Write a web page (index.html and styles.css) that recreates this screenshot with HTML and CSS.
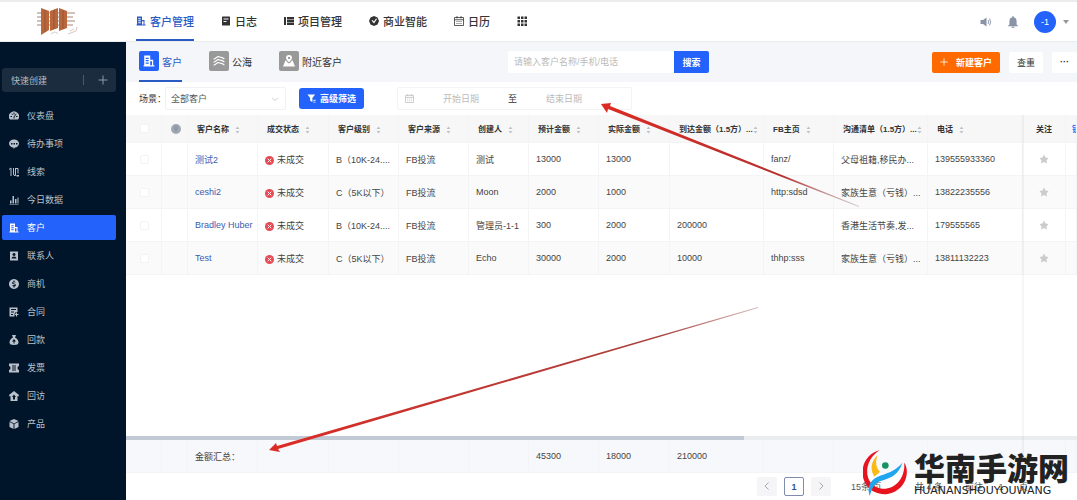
FILE: index.html
```html
<!DOCTYPE html>
<html lang="zh-CN">
<head>
    <meta charset="utf-8">
    <title>客户管理</title>
    <link rel="stylesheet" href="styles.css">
</head>
<body>
    <!-- icon sprite -->
    <svg class="sprite" aria-hidden="true">
        <symbol id="i-building" viewBox="0 0 20 20"><path fill-rule="evenodd" d="M2 1h10v7h5v9h2v2H1v-2h1zM4.500 4.500v2h5v-2zm0 4v2h5v-2zm0 4v2h5v-2zM12 10.500V17h3v-6.500z"/></symbol>
        <symbol id="i-log" viewBox="0 0 20 20"><path fill-rule="evenodd" d="M3 1h14q1 0 1 1v16q0 1-1 1H3q-1 0-1-1V2q0-1 1-1zm2 4v2h10V5zm0 5v2h6v-2z"/></symbol>
        <symbol id="i-project" viewBox="0 0 20 20"><path d="M0 2h4v16H0zM6 2h14v4H6zM6 7h14v5H6zM6 13h14v5H6z"/></symbol>
        <symbol id="i-bi" viewBox="0 0 20 20"><path fill-rule="evenodd" d="M10 0l7 3 3 7-3 7-7 3-7-3-3-7 3-7zM5 9l5 6 6-9-2-1-4 6-3-3z"/></symbol>
        <symbol id="i-calendar" viewBox="0 0 20 20"><path d="M1 3h18v16H1zM1 7.500h18M6 0v5M14 0v5M5 11h2M9 11h2M13 11h2M5 15h2M9 15h2M13 15h2" fill="none" stroke="currentColor" stroke-width="1.600"/></symbol>
        <symbol id="i-grid" viewBox="0 0 20 20"><path d="M1 1h5v5H1zM8 1h5v5H8zM15 1h5v5h-5zM1 8h5v5H1zM8 8h5v5H8zM15 8h5v5h-5zM1 15h5v5H1zM8 15h5v5H8zM15 15h5v5h-5z"/></symbol>
        <symbol id="i-sound" viewBox="0 0 24 20"><path d="M1 6h5l7-5v18l-7-5H1z"/><path d="M16 6q3 4 0 8M19 3q5 7 0 14" fill="none" stroke="currentColor" stroke-width="1.800"/></symbol>
        <symbol id="i-bell" viewBox="0 0 20 20"><path d="M9 0h2v2q5 1 5 7v5l3 3H1l3-3V9q0-6 5-7zM7 18h6q-1 2-3 2t-3-2z"/></symbol>
        <symbol id="i-gauge" viewBox="0 0 20 20"><path fill-rule="evenodd" d="M2 17a10 10 0 1 1 16 0zM3 10h3v2H3zm3-5l2 2-1 1-2-2zm3-2h2v4H9zm5 2l1 1-4 6v3H9v-3zm0 5h3v2h-3z"/></symbol>
        <symbol id="i-todo" viewBox="0 0 20 20"><path fill-rule="evenodd" d="M10 1c6 0 10 4 10 8s-4 8-8 8l-3 3v-3C4 17 0 13 0 9s4-8 10-8zM4 8v3h3V8zm5 0v3h3V8zm5 0v3h3V8z"/></symbol>
        <symbol id="i-leads" viewBox="0 0 20 20"><path d="M0 5l4-3v16M9 2v12q0 4 4 3V2M13 3h5v10" fill="none" stroke="currentColor" stroke-width="2"/><path d="M15 16h5v3h-5z"/></symbol>
        <symbol id="i-bars" viewBox="0 0 20 20"><path d="M2 11h3v6H2zM7 2h3v15H7zM12 8h3v9h-3zM17 5h2v12h-2zM1 18h18v1H1z"/></symbol>
        <symbol id="i-contact" viewBox="0 0 20 20"><path fill-rule="evenodd" d="M2 1h16v18H2zm8 3a3 3 0 1 0 .1 0zM5 15h10q0-4-5-4t-5 4z"/></symbol>
        <symbol id="i-money" viewBox="0 0 20 20"><path fill-rule="evenodd" d="M10 0a10 10 0 1 1-.1 0zM9 3v2q-3 1-3 3t6 3q0 2-5 1v2l2 1v2h2v-2q3-1 3-3t-6-4q0-2 5-1V6l-2-1V3z"/></symbol>
        <symbol id="i-contract" viewBox="0 0 20 20"><path fill-rule="evenodd" d="M1 1h16v9h-4v3h-2v6H1zm3 3v2h10V4zm0 5v2h6V9zm0 5v2h4v-2zM14 11h2v3h3v2h-3v3h-2v-3h-2v-2h2z"/></symbol>
        <symbol id="i-bag" viewBox="0 0 20 20"><path fill-rule="evenodd" d="M6 0h8l-2 5q7 4 7 10 0 5-9 5t-9-5Q1 9 8 5zm4 8l-4 5h3v4h2v-4h3z"/></symbol>
        <symbol id="i-invoice" viewBox="0 0 20 20"><path fill-rule="evenodd" d="M0 1h20v5q-3 0-3 4t3 4v5H0v-5q3 0 3-4T0 6zm6 4v2h8V5zm0 4v2h8V9zm0 4v2h8v-2z"/></symbol>
        <symbol id="i-visit" viewBox="0 0 20 20"><path fill-rule="evenodd" d="M10 0l10 8-1 3-2-1v10H3V10l-2 1-1-3zm0 7l-4 5h2v5h4v-5h2z"/></symbol>
        <symbol id="i-box" viewBox="0 0 20 20"><path d="M10 0l9 4-9 5-9-5zM1 6l8 4v10l-8-4zM19 6l-8 4v10l8-4z"/></symbol>
        <symbol id="i-sea" viewBox="0 0 20 20"><path d="M1 7q3-1 5-3t4-1 4 1 5 3M1 12q3-1 5-3t4-1 4 1 5 3M1 17q3-1 5-3t4-1 4 1 5 3" fill="none" stroke="currentColor" stroke-width="1.800"/></symbol>
        <symbol id="i-near" viewBox="0 0 20 20"><path fill-rule="evenodd" d="M10 0a5 5 0 0 1 5 5q0 3-5 7-5-4-5-7a5 5 0 0 1 5-5zm0 3a2 2 0 1 0 .1 0z"/><path d="M4 9h1q2 3 5 5 3-2 5-5h1l4 10H0z"/></symbol>
        <symbol id="i-filter" viewBox="0 0 20 20"><path d="M1 1h17l-6 8v9l-5-3V9zM14 13h5v2h-5zM14 17h5v2h-5z"/></symbol>
        <symbol id="i-plus" viewBox="0 0 20 20"><path d="M10 1v18M1 10h18" fill="none" stroke="currentColor" stroke-width="2"/></symbol>
        <symbol id="i-down" viewBox="0 0 20 20"><path d="M3 7l7 7 7-7" fill="none" stroke="currentColor" stroke-width="2"/></symbol>
        <symbol id="i-left" viewBox="0 0 20 20"><path d="M13 3l-7 7 7 7" fill="none" stroke="currentColor" stroke-width="2"/></symbol>
        <symbol id="i-right" viewBox="0 0 20 20"><path d="M7 3l7 7-7 7" fill="none" stroke="currentColor" stroke-width="2"/></symbol>
        <symbol id="i-sort" viewBox="0 0 10 16"><path d="M5 1l4 5H1zM5 15l4-5H1z"/></symbol>
        <symbol id="i-fail" viewBox="0 0 20 20"><circle cx="10" cy="10" r="10" fill="#e54b54"/><path d="M6 6l8 8M14 6l-8 8" stroke="#fff" stroke-width="2"/></symbol>
        <symbol id="i-star" viewBox="0 0 20 20"><path d="M10 1l3 6 6 1-4 5 1 6-6-3-6 3 1-6-4-5 6-1z"/></symbol>
        <symbol id="i-info" viewBox="0 0 20 20"><circle cx="10" cy="10" r="10" fill="#a0a7b2"/><path d="M10 5a3 3 0 1 0 .1 0zM10 10v5" fill="none" stroke="#7d8796" stroke-width="2"/></symbol>
    </svg>

    <header class="header">
        <div class="logo">
            <svg viewBox="0 0 42 30" aria-label="Logo">
                <path d="M0 6h38M0 10h36M0 14h38M0 18h36" stroke="#a58473" stroke-width="1"/>
                <path d="M4 1l8 3v19l-8 5zM13 4l8-3v20l-8 3zM22 1l8 3v17l-8 3z" fill="#b9683d"/>
                <path d="M8 3v22M17 3v19M26 3v19" stroke="#9b5230" stroke-width="1"/>
                <path d="M14 27q4-4 7 0M31 27l8-3 1-4M33 24l4-2" stroke="#d8c9c1" stroke-width="1" fill="none"/>
            </svg>
        </div>
        <nav class="top-nav">
            <a href="#" class="active"><svg><use href="#i-building"/></svg>客户管理</a>
            <a href="#"><svg><use href="#i-log"/></svg>日志</a>
            <a href="#"><svg><use href="#i-project"/></svg>项目管理</a>
            <a href="#"><svg><use href="#i-bi"/></svg>商业智能</a>
            <a href="#"><svg><use href="#i-calendar"/></svg>日历</a>
            <a href="#" aria-label="更多应用"><svg><use href="#i-grid"/></svg></a>
        </nav>
        <div class="user">
            <svg class="user-icon"><use href="#i-sound"/></svg>
            <svg class="user-icon"><use href="#i-bell"/></svg>
            <div class="avatar">-1</div>
            <span class="caret"></span>
        </div>
    </header>

    <div class="layout">
        <aside class="sidebar">
            <button class="quick-create">快速创建<span class="quick-plus"><svg><use href="#i-plus"/></svg></span></button>
            <nav class="side-nav">
                <a href="#"><svg><use href="#i-gauge"/></svg>仪表盘</a>
                <a href="#"><svg><use href="#i-todo"/></svg>待办事项</a>
                <a href="#"><svg><use href="#i-leads"/></svg>线索</a>
                <a href="#"><svg><use href="#i-bars"/></svg>今日数据</a>
                <a href="#" class="active"><svg><use href="#i-building"/></svg>客户</a>
                <a href="#"><svg><use href="#i-contact"/></svg>联系人</a>
                <a href="#"><svg><use href="#i-money"/></svg>商机</a>
                <a href="#"><svg><use href="#i-contract"/></svg>合同</a>
                <a href="#"><svg><use href="#i-bag"/></svg>回款</a>
                <a href="#"><svg><use href="#i-invoice"/></svg>发票</a>
                <a href="#"><svg><use href="#i-visit"/></svg>回访</a>
                <a href="#"><svg><use href="#i-box"/></svg>产品</a>
            </nav>
        </aside>

        <main class="main">
            <div class="toolbar">
                <div class="tabs">
                    <a href="#" class="active"><span class="tab-icon"><svg><use href="#i-building"/></svg></span>客户</a>
                    <a href="#"><span class="tab-icon"><svg><use href="#i-sea"/></svg></span>公海</a>
                    <a href="#"><span class="tab-icon"><svg><use href="#i-near"/></svg></span>附近客户</a>
                </div>
                <form class="search">
                    <input type="text" aria-label="搜索客户" placeholder="请输入客户名称/手机/电话">
                    <button type="button">搜索</button>
                </form>
                <div class="actions">
                    <button class="btn-new"><svg><use href="#i-plus"/></svg>新建客户</button>
                    <button class="btn-plain">查重</button>
                    <button class="btn-more">···</button>
                </div>
            </div>

            <div class="filters">
                <label for="scene">场景：</label>
                <div class="select-box">
                    <select id="scene"><option>全部客户</option></select>
                    <svg><use href="#i-down"/></svg>
                </div>
                <button class="btn-filter"><svg><use href="#i-filter"/></svg>高级筛选</button>
                <div class="date-range">
                    <svg><use href="#i-calendar"/></svg>
                    <input type="text" aria-label="开始日期" placeholder="开始日期">
                    <span>至</span>
                    <input type="text" aria-label="结束日期" placeholder="结束日期">
                </div>
            </div>

            <div class="table-area">
                <table class="grid">
                    <colgroup>
                        <col class="c-check"><col class="c-info"><col class="c-md"><col class="c-status"><col class="c-md"><col class="c-md"><col class="c-sm"><col class="c-md"><col class="c-status"><col class="c-lg"><col class="c-md"><col class="c-lg"><col class="c-phone"><col class="c-star"><col>
                    </colgroup>
                    <thead>
                        <tr>
                            <th><input type="checkbox" aria-label="全选"></th>
                            <th><svg class="info"><use href="#i-info"/></svg></th>
                            <th>客户名称<svg class="sort"><use href="#i-sort"/></svg></th>
                            <th>成交状态<svg class="sort"><use href="#i-sort"/></svg></th>
                            <th>客户级别<svg class="sort"><use href="#i-sort"/></svg></th>
                            <th>客户来源<svg class="sort"><use href="#i-sort"/></svg></th>
                            <th>创建人<svg class="sort"><use href="#i-sort"/></svg></th>
                            <th>预计金额<svg class="sort"><use href="#i-sort"/></svg></th>
                            <th>实际金额<svg class="sort"><use href="#i-sort"/></svg></th>
                            <th class="tight">到达金额（1.5方）...<svg class="sort"><use href="#i-sort"/></svg></th>
                            <th>FB主页<svg class="sort"><use href="#i-sort"/></svg></th>
                            <th class="tight">沟通清单（1.5方）...<svg class="sort"><use href="#i-sort"/></svg></th>
                            <th>电话<svg class="sort"><use href="#i-sort"/></svg></th>
                            <th class="follow">关注</th>
                            <th class="setting">锁</th>
                        </tr>
                    </thead>
                    <tbody>
                        <tr>
                            <td><input type="checkbox" aria-label="选择 测试2"></td><td></td>
                            <td><a href="#">测试2</a></td>
                            <td><svg class="fail"><use href="#i-fail"/></svg>未成交</td>
                            <td>B（10K-24....</td><td>FB投流</td><td>测试</td>
                            <td>13000</td><td>13000</td><td></td><td>fanz/</td>
                            <td>父母祖籍,移民办...</td><td>139555933360</td>
                            <td class="follow"><svg class="star"><use href="#i-star"/></svg></td><td></td>
                        </tr>
                        <tr>
                            <td><input type="checkbox" aria-label="选择 ceshi2"></td><td></td>
                            <td><a href="#">ceshi2</a></td>
                            <td><svg class="fail"><use href="#i-fail"/></svg>未成交</td>
                            <td>C（5K以下）</td><td>FB投流</td><td>Moon</td>
                            <td>2000</td><td>1000</td><td></td><td>http:sdsd</td>
                            <td>家族生意（亏钱）...</td><td>13822235556</td>
                            <td class="follow"><svg class="star"><use href="#i-star"/></svg></td><td></td>
                        </tr>
                        <tr>
                            <td><input type="checkbox" aria-label="选择 Bradley Huber"></td><td></td>
                            <td><a href="#">Bradley Huber</a></td>
                            <td><svg class="fail"><use href="#i-fail"/></svg>未成交</td>
                            <td>B（10K-24....</td><td>FB投流</td><td>管理员-1-1</td>
                            <td>300</td><td>2000</td><td>200000</td><td></td>
                            <td>香港生活节奏,发...</td><td>179555565</td>
                            <td class="follow"><svg class="star"><use href="#i-star"/></svg></td><td></td>
                        </tr>
                        <tr>
                            <td><input type="checkbox" aria-label="选择 Test"></td><td></td>
                            <td><a href="#">Test</a></td>
                            <td><svg class="fail"><use href="#i-fail"/></svg>未成交</td>
                            <td>C（5K以下）</td><td>FB投流</td><td>Echo</td>
                            <td>30000</td><td>2000</td><td>10000</td><td>thhp:sss</td>
                            <td>家族生意（亏钱）...</td><td>13811132223</td>
                            <td class="follow"><svg class="star"><use href="#i-star"/></svg></td><td></td>
                        </tr>
                    </tbody>
                </table>

                <div class="scrollbar"><div class="thumb"></div></div>

                <table class="grid summary">
                    <colgroup>
                        <col class="c-check"><col class="c-info"><col class="c-md"><col class="c-status"><col class="c-md"><col class="c-md"><col class="c-sm"><col class="c-md"><col class="c-status"><col class="c-lg"><col class="c-md"><col class="c-lg"><col class="c-phone"><col class="c-star"><col>
                    </colgroup>
                    <tbody>
                        <tr>
                            <td></td><td></td><td>金额汇总：</td><td></td><td></td><td></td><td></td>
                            <td>45300</td><td>18000</td><td>210000</td><td></td><td></td><td></td><td></td><td></td>
                        </tr>
                    </tbody>
                </table>
                <div class="fixed-edge"></div>
            </div>

            <div class="pagination">
                <button aria-label="上一页"><svg><use href="#i-left"/></svg></button>
                <button class="current">1</button>
                <button aria-label="下一页"><svg><use href="#i-right"/></svg></button>
                <select aria-label="每页条数"><option>15条/页</option></select>
                <span>共 4 条</span>
                <label for="goto">前往</label>
                <input id="goto" type="text" value="1">
                <span>页</span>
            </div>
        </main>
    </div>

    <!-- pointers to the date filter and the totals row -->
    <svg class="arrows" viewBox="0 0 1077 500" aria-hidden="true">
        <defs>
            <linearGradient id="fade1" gradientUnits="userSpaceOnUse" x1="601" y1="104" x2="860" y2="207">
                <stop offset="0" stop-color="#dc2b24"/><stop offset="0.7" stop-color="#b5302c"/><stop offset="1" stop-color="#bbb" stop-opacity="0.700"/>
            </linearGradient>
            <linearGradient id="fade2" gradientUnits="userSpaceOnUse" x1="269" y1="450" x2="758" y2="307">
                <stop offset="0" stop-color="#dc2b24"/><stop offset="0.800" stop-color="#a8423e"/><stop offset="1" stop-color="#c9a9a8" stop-opacity="0.800"/>
            </linearGradient>
        </defs>
        <path d="M601 104l10-1-1 3 249 100v1l-251-98-1 4z" fill="url(#fade1)"/>
        <path d="M269 450l7-7 1 3 481-139v1l-480 141 2 3z" fill="url(#fade2)"/>
    </svg>

    <div class="watermark">
        <svg viewBox="75 50 135 145" aria-hidden="true">
            <path d="M125 54C65 68 54 150 108 179c46 23 98-10 99-59 0-12-3-22-8-29 4 45-26 82-67 79C77 165 70 88 125 54z" fill="#e71420"/>
            <path d="M118 69c-22 21-21 46-9 65l17-15c-12-11-15-28-8-50z" fill="#fdb813"/>
            <circle cx="142" cy="100" r="10" fill="#159361"/>
            <path d="M194 91c-12 38-36 47-61 54-22 6-31 20-38 47-10-29 2-52 33-62 27-8 47-16 66-39z" fill="#1fa6ee"/>
        </svg>
        <div class="watermark-text">
            <strong>华南手游网</strong>
            <span>HUANANSHOUYOUWANG</span>
        </div>
    </div>
</body>
</html>
```
FILE: styles.css
```css
* {
    box-sizing: border-box;
}
body {
    margin: 0;
    height: 100vh;
    display: flex;
    flex-direction: column;
    overflow: hidden;
    font-family: "Liberation Sans", "Noto Sans CJK SC", sans-serif;
    font-size: 9px;
    color: #333;
    background: #fff;
}
a {
    color: inherit;
    text-decoration: none;
}
button, input, select {
    font: inherit;
    color: inherit;
    margin: 0;
    padding: 0;
    border: none;
    background: none;
}
svg {
    width: 10px;
    height: 10px;
    fill: currentColor;
    flex: none;
}
.sprite {
    display: none;
}

/* header */
.header {
    flex: none;
    height: 42px;
    display: flex;
    border-top: 2px solid #ececed;
    border-bottom: 1px solid #ececee;
}
.logo {
    width: 136px;
    padding: 5px 0 0 37px;
}
.logo svg {
    width: 42px;
    height: 30px;
}
.top-nav {
    display: flex;
    gap: 27px;
}
.top-nav a {
    display: flex;
    align-items: center;
    gap: 4px;
    font-size: 11px;
    font-weight: 500;
    border-bottom: 2px solid transparent;
}
.top-nav .active {
    color: #2a5bc4;
    border-color: #2a5bc4;
}
.user {
    margin-left: auto;
    padding-right: 8px;
    display: flex;
    align-items: center;
    gap: 15px;
}
.user-icon {
    width: 12px;
    height: 12px;
    color: #8a93a8;
}
.avatar {
    width: 22px;
    height: 22px;
    border-radius: 50%;
    background: #2362fb;
    color: #fff;
    line-height: 22px;
    text-align: center;
}
.caret {
    border: 3px solid transparent;
    border-top: 4px solid #999;
    border-bottom: none;
    margin-left: -8px;
}

/* sidebar */
.layout {
    flex: 1;
    min-height: 0;
    display: flex;
}
.sidebar {
    flex: none;
    width: 126px;
    padding: 26px 10px 0 2px;
    background: #001529;
    color: #b9c2cb;
}
.quick-create {
    width: 100%;
    height: 24px;
    padding: 0 8px 0 9px;
    display: flex;
    align-items: center;
    justify-content: space-between;
    border-radius: 3px;
    background: #1a2c3d;
    color: #b4bdc6;
}
.quick-plus {
    height: 10px;
    padding-left: 14px;
    border-left: 1px solid #4a5867;
}
.quick-plus svg {
    display: block;
    color: #8e9aa6;
}
.side-nav {
    margin-top: 11px;
    display: flex;
    flex-direction: column;
    gap: 3px;
}
.side-nav a {
    height: 25px;
    padding-left: 7px;
    display: flex;
    align-items: center;
    gap: 8px;
    border-radius: 2px;
}
.side-nav .active {
    background: #2362fb;
    color: #fff;
}

/* toolbar */
.main {
    flex: 1;
    min-width: 0;
    display: flex;
    flex-direction: column;
}
.toolbar {
    flex: none;
    height: 40px;
    padding-left: 13px;
    display: flex;
    align-items: center;
    background: #f5f6f9;
}
.tabs {
    width: 369px;
    height: 40px;
    display: flex;
    gap: 27px;
}
.tabs a {
    display: flex;
    align-items: center;
    gap: 3px;
    font-size: 10px;
    border-bottom: 2px solid transparent;
}
.tabs .active {
    color: #2a5bc4;
    border-color: #2a5bc4;
}
.tab-icon {
    width: 20px;
    height: 20px;
    display: flex;
    align-items: center;
    justify-content: center;
    border-radius: 2px;
    background: #999;
    color: #fff;
}
.tab-icon svg {
    width: 12px;
    height: 12px;
}
.active .tab-icon {
    background: #2362fb;
}
.search {
    display: flex;
    height: 22px;
}
.search input {
    width: 166px;
    padding: 0 6px;
    background: #fff;
    border-radius: 2px 0 0 2px;
}
input::placeholder {
    color: #bbb;
}
.search button {
    width: 35px;
    border-radius: 0 2px 2px 0;
    background: #2362fb;
    color: #fff;
    font-weight: bold;
}
.actions {
    margin-left: auto;
    display: flex;
    gap: 9px;
}
.actions button {
    height: 21px;
    border-radius: 2px;
    background: #fff;
}
.actions .btn-new {
    width: 68px;
    display: flex;
    align-items: center;
    justify-content: center;
    gap: 8px;
    background: #ff6a00;
    color: #fff;
    font-weight: bold;
}
.btn-new svg {
    width: 8px;
    height: 8px;
}
.btn-plain {
    width: 34px;
}
.btn-more {
    width: 25px;
    font-weight: bold;
}

/* filters */
.filters {
    flex: none;
    height: 33px;
    padding-left: 13px;
    display: flex;
    align-items: center;
}
.filters label {
    width: 26px;
    white-space: nowrap;
}
.select-box {
    position: relative;
    width: 121px;
}
.select-box select {
    width: 100%;
    height: 23px;
    padding: 0 5px;
    border: 1px solid #f1f1f3;
    border-radius: 2px;
    appearance: none;
    color: #555;
}
.select-box svg {
    position: absolute;
    top: 8px;
    right: 7px;
    width: 8px;
    height: 8px;
    color: #bbb;
}
.btn-filter {
    width: 65px;
    height: 21px;
    margin: 0 33px 0 13px;
    display: flex;
    align-items: center;
    justify-content: center;
    gap: 4px;
    border-radius: 3px;
    background: #2362fb;
    color: #fff;
    font-weight: bold;
}
.btn-filter svg {
    width: 9px;
    height: 9px;
}
.date-range {
    width: 235px;
    height: 23px;
    padding: 0 7px;
    display: flex;
    align-items: center;
    gap: 5px;
    border: 1px solid #f3f3f5;
    border-radius: 2px;
}
.date-range svg {
    width: 9px;
    height: 9px;
    color: #bbb;
}
.date-range input {
    width: 84px;
    text-align: center;
}

/* table */
.table-area {
    position: relative;
    flex: 1;
    display: flex;
    flex-direction: column;
    overflow: hidden;
}
.grid {
    width: 100%;
    table-layout: fixed;
    border-collapse: separate;
    border-spacing: 0;
}
.c-check { width: 36px; }
.c-info { width: 26px; }
.c-sm { width: 60px; }
.c-md { width: 70px; }
.c-status { width: 71px; }
.c-lg { width: 94px; }
.c-phone { width: 95px; }
.c-star { width: 43px; }
.grid th, .grid td {
    border-right: 1px solid #f4f4f6;
    border-bottom: 1px solid #f4f4f6;
    text-align: left;
    white-space: nowrap;
}
.grid th {
    height: 28px;
    padding: 0 0 0 9px;
    font-size: 8px;
    background: #f7f7f8;
}
.grid td {
    height: 33px;
    padding: 0 0 0 7px;
    color: #444;
}
.grid tbody tr:nth-child(even) {
    background: #fafafa;
}
.grid td a {
    color: #3d5cb0;
}
.grid input {
    display: block;
    width: 9px;
    height: 9px;
    margin-left: 5px;
    appearance: none;
    border: 1px solid #f3f3f3;
    border-radius: 2px;
    background: #fff;
}
.grid td input {
    margin-left: 7px;
}
.grid svg {
    vertical-align: middle;
}
.sort {
    width: 5px;
    height: 8px;
    margin-left: 6px;
    color: #bfc3ca;
}
.grid .tight .sort {
    margin-left: 0;
}
.fail {
    width: 9px;
    height: 9px;
    margin-right: 3px;
}
.grid .follow {
    padding: 0;
    text-align: center;
}
.star {
    color: #ccc;
}
.grid .setting {
    padding-left: 6px;
    color: #2362fb;
    overflow: hidden;
}
.scrollbar {
    margin-top: auto;
    height: 4px;
    flex: none;
    background: #ebecf0;
}
.thumb {
    width: 65%;
    height: 4px;
    background: #c2cbd5;
}
.grid.summary {
    background: #f7f8fb;
}
.fixed-edge {
    position: absolute;
    top: 0;
    bottom: 0;
    right: 53px;
    width: 3px;
    background: linear-gradient(to right, rgba(0, 0, 0, 0), rgba(0, 0, 0, 0.05));
}

/* pagination */
.pagination {
    flex: none;
    height: 27px;
    padding-right: 49px;
    display: flex;
    align-items: center;
    justify-content: flex-end;
    gap: 7px;
    color: #555;
}
.pagination button {
    width: 20px;
    height: 19px;
    border-radius: 2px;
    background: #f5f5f7;
    color: #aaa;
}
.pagination .current {
    background: #fff;
    border: 1px solid #7f8cab;
    color: #31509e;
    font-weight: bold;
}
.pagination select {
    width: 70px;
    height: 19px;
    padding-left: 13px;
    appearance: none;
}
.pagination label {
    margin-left: 15px;
}
.pagination input {
    width: 22px;
    text-align: center;
}

/* overlays */
.arrows {
    position: absolute;
    top: 0;
    left: 0;
    width: 1077px;
    height: 500px;
    pointer-events: none;
}
.watermark {
    position: absolute;
    right: 8px;
    bottom: 3px;
    display: flex;
    align-items: center;
    gap: 6px;
    color: #222;
    pointer-events: none;
}
.watermark svg {
    width: 45px;
    height: 48px;
}
.watermark-text {
    display: flex;
    flex-direction: column;
}
.watermark-text strong {
    font-family: "Noto Sans CJK SC", sans-serif;
    font-size: 31px;
    line-height: 36px;
    font-weight: 900;
}
.watermark-text span {
    font-family: "DejaVu Sans", sans-serif;
    font-size: 11px;
    line-height: 12px;
}
```
